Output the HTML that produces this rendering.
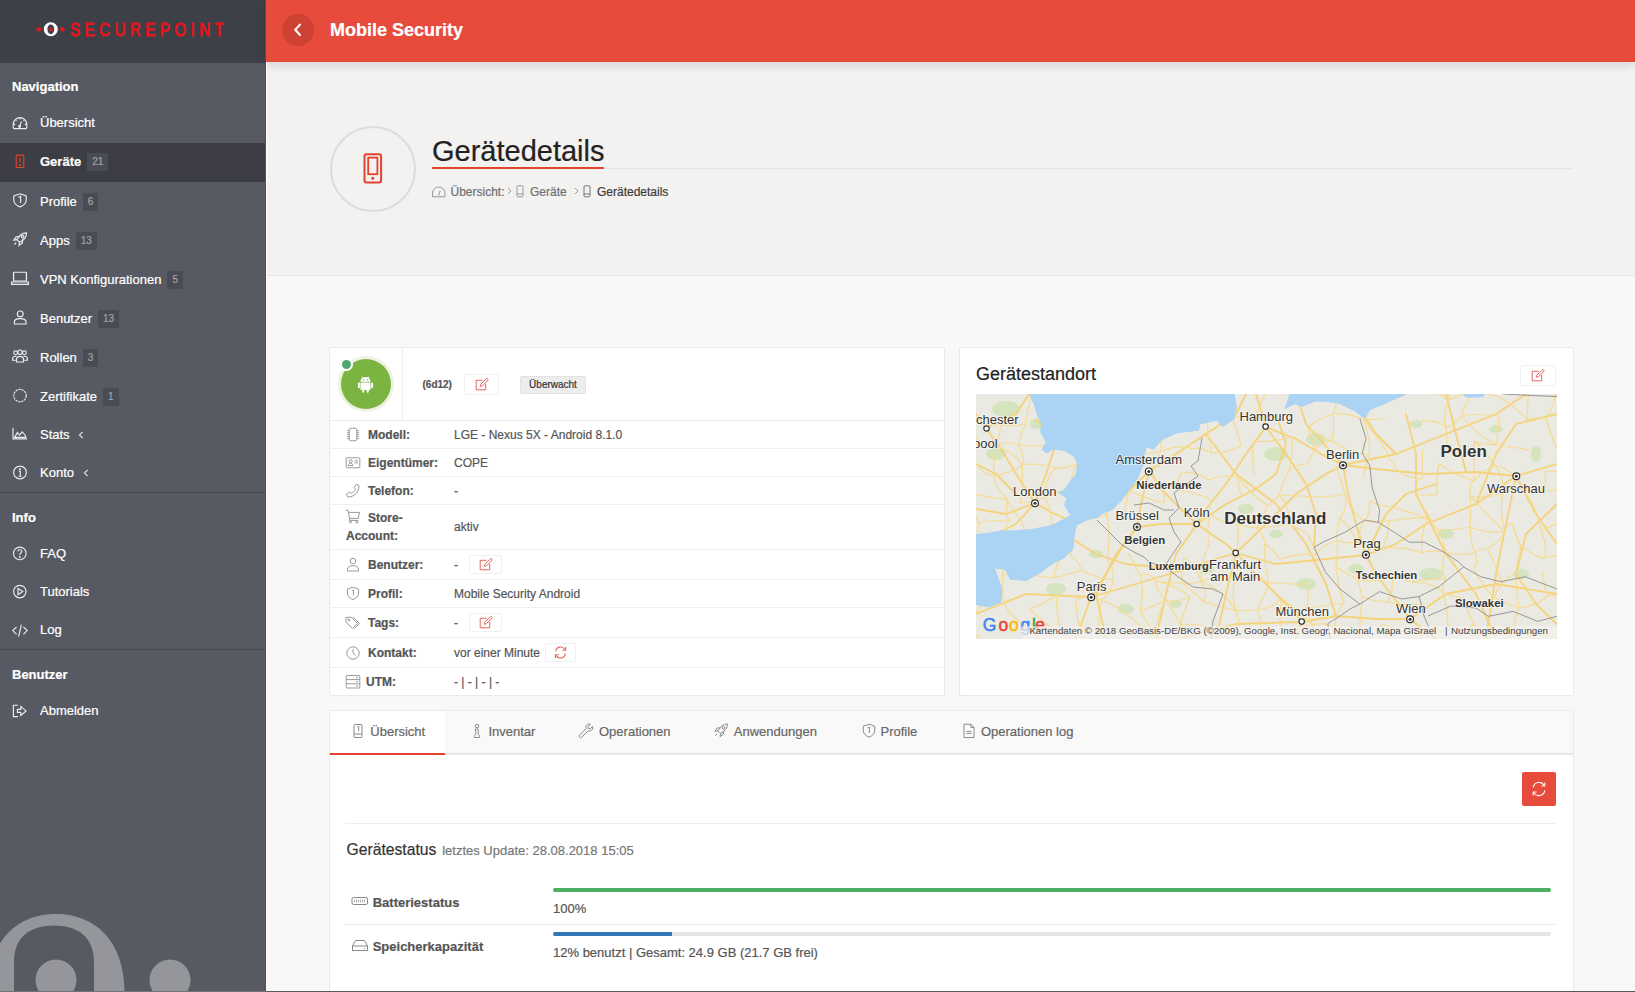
<!DOCTYPE html>
<html><head><meta charset="utf-8">
<style>
*{box-sizing:border-box;margin:0;padding:0}
html,body{width:1635px;height:992px;overflow:hidden}
body{font-family:"Liberation Sans",sans-serif;background:#f9f8f6;position:relative;color:#333;-webkit-text-stroke-width:.2px}
.abs{position:absolute}
#sb{position:absolute;left:0;top:0;width:266px;height:992px;background:#575a63;overflow:hidden;border-right:1px solid #50535a}
#sbw{position:absolute;left:266px;top:62px;width:1px;height:930px;background:#fff;z-index:3}
#logo{position:absolute;left:0;top:0;width:266px;height:63px;background:#3e4048}
.nh{position:absolute;left:12px;font-size:13px;font-weight:bold;color:#fff;line-height:16px}
.ni{position:absolute;left:0;width:266px;height:39px}
.ni .t{position:absolute;left:40px;top:11px;font-size:13px;color:#fff;line-height:16px;white-space:nowrap}
.ic{position:absolute;left:12px;top:11px;width:16px;height:16px;fill:none;stroke:#ececee;stroke-width:1.15}
.bd{display:inline-block;margin-left:6px;background:#4a4c54;color:#a0a2a8;font-size:10px;line-height:18px;height:18px;padding:0 5px;vertical-align:1px;border-radius:1px;font-weight:normal}
.sep{position:absolute;left:0;width:266px;height:1px;background:#45474e}
#hdr{position:absolute;left:266px;top:0;width:1369px;height:62px;background:#e64b3b;box-shadow:0 3px 10px rgba(0,0,0,.13);z-index:2}
#ph{position:absolute;left:266px;top:62px;width:1369px;height:214px;background:#f3f2f0;border-bottom:1px solid #e6e5e3}
.card{position:absolute;background:#fff;border:1px solid #ebeae8;border-radius:2px}
.lbl{font-size:12px;font-weight:bold;color:#555;line-height:14px;white-space:nowrap}
.val{font-size:12px;color:#555;line-height:14px;white-space:nowrap}
.ico{fill:none;stroke:#9a9a9a;stroke-width:1}
.ebtn{border:1px solid #f1f0f0;border-radius:2px;background:#fff;display:flex;align-items:center;justify-content:center}
.tab{position:absolute;top:724px;font-size:13px;color:#666;line-height:16px;white-space:nowrap}
.tico{fill:none;stroke:#8a8a8a;stroke-width:1}
.lbl2{font-size:13px;font-weight:bold;color:#555;line-height:16px;white-space:nowrap}
.val2{font-size:13px;color:#555;line-height:16px;white-space:nowrap}
</style></head><body>
<div id="sb">
  <div id="logo">
    <svg class="abs" style="left:0;top:0" width="266" height="63" viewBox="0 0 266 63">
      <circle cx="38.8" cy="29.3" r="2.3" fill="#e3161d"/>
      <path fill-rule="evenodd" fill="#fff" d="M50.8 22.3A7 7 0 1 1 50.8 36.3A7 7 0 1 1 50.8 22.3Z M50.8 24.4A3.4 4.9 0 1 0 50.8 34.2A3.4 4.9 0 1 0 50.8 24.4Z"/>
      <circle cx="50.8" cy="29.4" r="2" fill="#e3161d"/>
      <circle cx="62.3" cy="29.3" r="2.3" fill="#e3161d"/>
    </svg>
    <div class="abs" style="left:69.5px;top:20px;font-family:'Liberation Sans',sans-serif;font-size:18px;line-height:20px;letter-spacing:5.1px;color:#e8141c;white-space:nowrap;transform:scaleX(.85);transform-origin:0 0;-webkit-text-stroke:.9px #e8141c">SECUREPOINT</div>
  </div>
  <div class="nh" style="top:79px">Navigation</div>
  <div class="ni" style="top:104px"><svg class="ic" viewBox="0 0 16 16"><path d="M2.2 13.6H13.8C14.4 13.6 14.8 13.2 14.8 12.6V9.4C14.8 5.6 11.8 2.6 8 2.6C4.2 2.6 1.2 5.6 1.2 9.4V12.6C1.2 13.2 1.6 13.6 2.2 13.6Z"/><path d="M7.4 11.6L9.6 6.4"/><circle cx="7.6" cy="11.4" r=".9"/><path d="M8 3V4.4M3.6 5.2L4.5 6.1M12.4 5.2L11.5 6.1M2 9.4H3.3M12.7 9.4H14"/></svg><div class="t">Übersicht</div></div>
  <div class="ni" style="top:143px;background:#3d3e45"><svg class="ic" viewBox="0 0 16 16" style="stroke:#e5412f"><rect x="4.2" y="1.1" width="7.6" height="12.4" rx="1"/><path d="M8 3.4V8.6"/><circle cx="8" cy="11.2" r=".5"/></svg><div class="t" style="font-weight:bold;top:10px">Geräte<span class="bd">21</span></div></div>
  <div class="ni" style="top:182px"><svg class="ic" viewBox="0 0 16 16"><path d="M8 0.8L14.2 2.9V7C14.2 10.4 11.5 12.6 8 13.9C4.5 12.6 1.8 10.4 1.8 7V2.9Z"/><path d="M6.5 4.2L8.6 3.4V10"/></svg><div class="t">Profile<span class="bd">6</span></div></div>
  <div class="ni" style="top:221px"><svg class="ic" viewBox="0 0 16 16"><path d="M14.5 0.8C10.5 0.8 6.8 3.6 5 7.6L7.6 10.2C11.6 8.4 14.5 4.8 14.5 0.8Z"/><path d="M5 7.6L1.8 8.2L4.2 4.8L7.8 4.6"/><path d="M7.6 10.2L7 13.4L10.4 11L10.6 7.4"/><circle cx="10.6" cy="4.7" r="1.3"/><path d="M4.2 10.6L2.2 12.6"/></svg><div class="t">Apps<span class="bd">13</span></div></div>
  <div class="ni" style="top:260px"><svg class="ic" viewBox="0 0 16 16" style="left:11px;width:18px;height:16px" preserveAspectRatio="none"><rect x="2.3" y="1.2" width="11.4" height="8.8" rx=".6"/><path d="M0.6 11H15.4V13.4H0.6Z"/></svg><div class="t">VPN Konfigurationen<span class="bd">5</span></div></div>
  <div class="ni" style="top:299px"><svg class="ic" viewBox="0 0 16 16"><circle cx="8.2" cy="3.9" r="2.9"/><path d="M2.3 14V12.2C2.3 9.6 5 8.6 8.2 8.6C11.4 8.6 14.1 9.6 14.1 12.2V14Z"/></svg><div class="t">Benutzer<span class="bd">13</span></div></div>
  <div class="ni" style="top:338px"><svg class="ic" viewBox="0 0 16 16" style="left:11px;width:18px"><circle cx="3.6" cy="3.8" r="1.9"/><circle cx="8" cy="3.2" r="2.2"/><circle cx="12.4" cy="3.8" r="1.9"/><path d="M4.5 13V10.6C4.5 8.4 6 7.4 8 7.4C10 7.4 11.5 8.4 11.5 10.6V13Z"/><path d="M4.4 7.4C2.2 7 0.6 7.8 0.6 9.6V11.2H4.4"/><path d="M11.6 7.4C13.8 7 15.4 7.8 15.4 9.6V11.2H11.6"/></svg><div class="t">Rollen<span class="bd">3</span></div></div>
  <div class="ni" style="top:377px"><svg class="ic" viewBox="0 0 16 16"><circle cx="8" cy="7.6" r="6.2" stroke-dasharray="2.2 0.8"/></svg><div class="t">Zertifikate<span class="bd">1</span></div></div>
  <div class="ni" style="top:416px"><svg class="ic" viewBox="0 0 16 16"><path d="M1 0.8V11.8H15"/><path d="M2.6 10.4L5.4 5.6L7.6 8.2L10.2 4.8L13.2 8.2L13.8 10.4Z"/></svg><div class="t">Stats</div><svg class="abs" style="left:78px;top:15px" width="6" height="8" viewBox="0 0 6 8"><path d="M4.6 1L1.4 4L4.6 7" fill="none" stroke="#ddd" stroke-width="1.1"/></svg></div>
  <div class="ni" style="top:454px"><svg class="ic" viewBox="0 0 16 16"><circle cx="8" cy="7.5" r="6.4"/><path d="M6.8 6.4H8.2V11.2M6.6 11.2H9.6"/><circle cx="8" cy="4.2" r=".5"/></svg><div class="t">Konto</div><svg class="abs" style="left:83px;top:15px" width="6" height="8" viewBox="0 0 6 8"><path d="M4.6 1L1.4 4L4.6 7" fill="none" stroke="#ddd" stroke-width="1.1"/></svg></div>
  <div class="sep" style="top:492px"></div>
  <div class="nh" style="top:510px">Info</div>
  <div class="ni" style="top:535px"><svg class="ic" viewBox="0 0 16 16"><circle cx="7.8" cy="7.4" r="6.3"/><path d="M5.9 5.6C5.9 4.4 6.8 3.7 7.9 3.7C9 3.7 9.8 4.4 9.8 5.4C9.8 6.8 7.9 6.9 7.9 8.6V9"/><circle cx="7.9" cy="11" r=".4"/></svg><div class="t">FAQ</div></div>
  <div class="ni" style="top:573px"><svg class="ic" viewBox="0 0 16 16"><circle cx="7.8" cy="7.6" r="6.2"/><path d="M6 4.6V10.6L10.8 7.6Z"/></svg><div class="t">Tutorials</div></div>
  <div class="ni" style="top:611px"><svg class="ic" viewBox="0 0 16 16" style="left:12px;top:12px"><path d="M4.6 3.8L0.8 7.6L4.6 11.4"/><path d="M11.4 3.8L15.2 7.6L11.4 11.4"/><path d="M9.4 1.6L6.6 13.6"/></svg><div class="t">Log</div></div>
  <div class="sep" style="top:649px"></div>
  <div class="nh" style="top:666.5px">Benutzer</div>
  <div class="ni" style="top:692px"><svg class="ic" viewBox="0 0 16 16" style="top:12px"><path d="M6 1.2H1.4V12.6H6"/><path d="M5.4 5.4H8.8V2.4L14 6.9L8.8 11.4V8.4H5.4Z"/></svg><div class="t">Abmelden</div></div>
  <svg class="abs" style="left:0;top:900px" width="266" height="92" viewBox="0 900 266 92">
    <path fill-rule="evenodd" d="M56 914C96 914 124.5 942 124.5 992H-12C-12 942 16 914 56 914Z M14 992V962C14 937 30 925.5 54 925.5C78 925.5 94 937 94 962V992Z" fill="#95969b"/>
    <circle cx="56" cy="980" r="20.5" fill="#95969b"/>
    <circle cx="170" cy="980" r="20.5" fill="#95969b"/>
  </svg>
</div>
<div id="sbw"></div>
<div id="hdr">
  <div class="abs" style="left:16px;top:14px;width:32px;height:32px;border-radius:50%;background:#cd4233"></div>
  <svg class="abs" style="left:16px;top:14px" width="32" height="32" viewBox="0 0 32 32"><path d="M18 10.6L13.2 15.8L18 21" fill="none" stroke="#fff" stroke-width="2" stroke-linecap="round" stroke-linejoin="round"/></svg>
  <div class="abs" style="left:64px;top:19px;font-size:18px;font-weight:bold;color:#fff;line-height:22px;white-space:nowrap">Mobile Security</div>
</div>
<div id="ph">
  <div class="abs" style="left:64px;top:64px;width:86px;height:86px;border-radius:50%;border:2px solid #dddcda"></div>
  <svg class="abs" style="left:97px;top:91px" width="20" height="31" viewBox="0 0 20 31"><rect x="1.5" y="1.2" width="16.6" height="28.2" rx="2.2" fill="none" stroke="#e5412f" stroke-width="2"/><rect x="5.2" y="4.6" width="9.2" height="16.6" fill="none" stroke="#e5412f" stroke-width="1.8"/><circle cx="9.8" cy="25.2" r="1.5" fill="#e5412f"/></svg>
  <div class="abs" style="left:166px;top:72.5px;font-size:29px;color:#222;line-height:32px;white-space:nowrap">Gerätedetails</div>
  <div class="abs" style="left:166px;top:106px;width:1140px;height:1px;background:#e5e4e2"></div>
  <div class="abs" style="left:166px;top:105px;width:172px;height:2px;background:#e5412f"></div>
  <svg class="abs" style="left:165px;top:123px" width="16" height="13" viewBox="0 0 16 13"><path d="M1.5 11.8V8A6.2 6 0 0 1 13.9 8V11.8Z" fill="none" stroke="#999" stroke-width="1"/><path d="M7.7 10.6L9.2 5.6" stroke="#999" stroke-width="1"/></svg>
  <div class="abs" style="left:184.5px;top:123px;font-size:12px;color:#707070;line-height:14px;white-space:nowrap">Übersicht:</div>
  <svg class="abs" style="left:241px;top:125px" width="5" height="8" viewBox="0 0 5 8"><path d="M1 1L4 4L1 7" fill="none" stroke="#999" stroke-width="1"/></svg>
  <svg class="abs" style="left:250px;top:123px" width="8" height="13" viewBox="0 0 8 13"><rect x="1" y="0.8" width="6" height="11" rx="1" fill="none" stroke="#999" stroke-width="1"/><path d="M1 9H7" stroke="#999"/></svg>
  <div class="abs" style="left:264px;top:123px;font-size:12px;color:#707070;line-height:14px;white-space:nowrap">Geräte</div>
  <svg class="abs" style="left:308px;top:125px" width="5" height="8" viewBox="0 0 5 8"><path d="M1 1L4 4L1 7" fill="none" stroke="#999" stroke-width="1"/></svg>
  <svg class="abs" style="left:317px;top:123px" width="8" height="13" viewBox="0 0 8 13"><rect x="1" y="0.8" width="6" height="11" rx="1" fill="none" stroke="#777" stroke-width="1"/><path d="M1 9H7" stroke="#777"/></svg>
  <div class="abs" style="left:331px;top:123px;font-size:12px;color:#3c3c3c;line-height:14px;white-space:nowrap">Gerätedetails</div>
</div>
<div class="card" style="left:329px;top:347px;width:616px;height:349px">
  <div class="abs" style="left:72px;top:0;width:1px;height:73px;background:#efeeee"></div>
  <div class="abs" style="left:0;top:72px;width:614px;height:1px;background:#efeeed"></div>
  <div class="abs" style="left:8px;top:8px;width:56px;height:56px;border-radius:50%;background:#eef2e2"></div>
  <div class="abs" style="left:11px;top:11px;width:50px;height:50px;border-radius:50%;background:#7cb441"></div>
  <svg class="abs" style="left:23.5px;top:24.5px" width="23" height="23" viewBox="0 0 20 20"><path d="M5.6 7.6A4.4 4.2 0 0 1 14.4 7.6Z" fill="#fff"/><circle cx="8.2" cy="5.8" r=".6" fill="#7cb441"/><circle cx="11.8" cy="5.8" r=".6" fill="#7cb441"/><path d="M7 3.2L7.8 4.4M13 3.2L12.2 4.4" stroke="#fff" stroke-width=".7"/><rect x="5.6" y="8.3" width="8.8" height="6.4" rx=".8" fill="#fff"/><rect x="3.4" y="8.3" width="1.7" height="5" rx=".85" fill="#fff"/><rect x="14.9" y="8.3" width="1.7" height="5" rx=".85" fill="#fff"/><rect x="7.2" y="13.6" width="1.7" height="3.6" rx=".85" fill="#fff"/><rect x="11.1" y="13.6" width="1.7" height="3.6" rx=".85" fill="#fff"/></svg>
  <div class="abs" style="left:10px;top:10px;width:13px;height:13px;border-radius:50%;background:#fff"></div>
  <div class="abs" style="left:12px;top:12px;width:9px;height:9px;border-radius:50%;background:#4ea86b"></div>
  <div class="abs" style="left:92.5px;top:30.5px;font-size:10px;font-weight:bold;color:#555;line-height:12px">(6d12)</div>
  <div class="abs ebtn" style="left:134px;top:26px;width:35px;height:21px"><svg width="14" height="13" viewBox="0 0 14 13"><path d="M7.6 2.3H1.2V11.8H10.7V6" fill="none" stroke="#e5665c" stroke-width="1"/><path d="M5.4 8.3L5.8 6.2L11.4 0.8C11.8 0.5 12.3 0.5 12.6 0.8L13 1.2C13.3 1.5 13.3 2 13 2.3L7.4 7.8Z" fill="none" stroke="#e5665c" stroke-width="1"/></svg></div>
  <div class="abs" style="left:190px;top:27.5px;width:66px;height:18px;background:#eeeded;border:1px solid #e3e2e1;border-radius:2px;font-size:10px;color:#333;line-height:16px;text-align:center">Überwacht</div>
</div>
<div class="abs lbl" style="left:368px;top:427.5px">Modell:</div>
<svg class="abs ico" style="left:345px;top:426.5px" width="16" height="16" viewBox="0 0 16 16"><rect x="4.2" y="1.2" width="7.6" height="12.6" rx="1.8"/><path d="M2.2 3.6H4.2M2.2 5.6H4.2M2.2 7.6H4.2M2.2 9.6H4.2M2.2 11.6H4.2M11.8 3.6H13.8M11.8 5.6H13.8M11.8 7.6H13.8M11.8 9.6H13.8M11.8 11.6H13.8"/></svg>
<div class="abs val" style="left:454px;top:427.5px">LGE - Nexus 5X - Android 8.1.0</div>
<div class="abs" style="left:330px;top:448px;width:614px;height:1px;background:#f0efee"></div>
<div class="abs lbl" style="left:368px;top:455.5px">Eigentümer:</div>
<svg class="abs ico" style="left:345px;top:454.5px" width="16" height="16" viewBox="0 0 16 16"><rect x="1.2" y="2.8" width="13.6" height="10" rx=".8"/><circle cx="5.6" cy="6.2" r="1.5"/><path d="M3.2 10.6C3.2 9 4.2 8.4 5.6 8.4C7 8.4 8 9 8 10.6Z"/><path d="M9.6 5.8H13M9.6 7.8H13"/></svg>
<div class="abs val" style="left:454px;top:455.5px">COPE</div>
<div class="abs" style="left:330px;top:476px;width:614px;height:1px;background:#f0efee"></div>
<div class="abs lbl" style="left:368px;top:483.5px">Telefon:</div>
<svg class="abs ico" style="left:345px;top:482.5px" width="16" height="16" viewBox="0 0 16 16"><path d="M11.4 1.2L9.2 4.4L10.6 6.2C9.8 8 8.2 9.6 6.4 10.4L4.6 9L1.4 11.2L2.8 14C9 14.2 14.2 9 14 2.6Z"/></svg>
<div class="abs val" style="left:454px;top:483.5px">-</div>
<div class="abs" style="left:330px;top:504px;width:614px;height:1px;background:#f0efee"></div>
<div class="abs lbl" style="left:368px;top:511.2px">Store-</div>
<div class="abs lbl" style="left:346px;top:528.6px">Account:</div>
<svg class="abs ico" style="left:345px;top:509.0px" width="16" height="16" viewBox="0 0 16 16"><path d="M0.8 1.4H3L4.6 9.4H13.2L14.6 3.4H3.6"/><path d="M4.6 9.4L4.2 11.4H13.4"/><circle cx="5.6" cy="13" r="1"/><circle cx="11.8" cy="13" r="1"/></svg>
<div class="abs val" style="left:454px;top:519.8px">aktiv</div>
<div class="abs" style="left:330px;top:549px;width:614px;height:1px;background:#f0efee"></div>
<div class="abs lbl" style="left:368px;top:557.5px">Benutzer:</div>
<svg class="abs ico" style="left:345px;top:556.5px" width="16" height="16" viewBox="0 0 16 16"><circle cx="8" cy="4" r="2.8"/><path d="M2.5 14V12.2C2.5 9.7 5 8.7 8 8.7C11 8.7 13.5 9.7 13.5 12.2V14Z"/></svg>
<div class="abs val" style="left:454px;top:557.5px">-</div>
<div class="abs" style="left:330px;top:579px;width:614px;height:1px;background:#f0efee"></div>
<div class="abs lbl" style="left:368px;top:586.5px">Profil:</div>
<svg class="abs ico" style="left:345px;top:585.5px" width="16" height="16" viewBox="0 0 16 16"><path d="M8 1.2L13.6 3V7C13.6 10.2 11.2 12.4 8 13.6C4.8 12.4 2.4 10.2 2.4 7V3Z"/><path d="M6.8 4.6L8.4 4V9.4"/></svg>
<div class="abs val" style="left:454px;top:586.5px">Mobile Security Android</div>
<div class="abs" style="left:330px;top:607px;width:614px;height:1px;background:#f0efee"></div>
<div class="abs lbl" style="left:368px;top:615.5px">Tags:</div>
<svg class="abs ico" style="left:345px;top:614.5px" width="16" height="16" viewBox="0 0 16 16"><path d="M1 2.5V7L7.5 13.5L12.5 8.5L6 2Z" /><circle cx="4" cy="5" r="1"/><path d="M8 2L14.5 8.5L9.5 13.5"/></svg>
<div class="abs val" style="left:454px;top:615.5px">-</div>
<div class="abs" style="left:330px;top:637px;width:614px;height:1px;background:#f0efee"></div>
<div class="abs lbl" style="left:368px;top:645.5px">Kontakt:</div>
<svg class="abs ico" style="left:345px;top:644.5px" width="16" height="16" viewBox="0 0 16 16"><circle cx="8" cy="8" r="6.2"/><path d="M8 4V8L10.6 10.4"/></svg>
<div class="abs val" style="left:454px;top:645.5px">vor einer Minute</div>
<div class="abs" style="left:330px;top:667px;width:614px;height:1px;background:#f0efee"></div>
<div class="abs lbl" style="left:366px;top:674.5px">UTM:</div>
<svg class="abs ico" style="left:345px;top:673.5px" width="16" height="16" viewBox="0 0 16 16"><rect x="1.2" y="1.5" width="13.6" height="12.5" rx=".5"/><path d="M1.2 5.6H14.8M1.2 9.8H14.8M11 3.5H13M11 7.7H13M11 11.9H13"/></svg>
<div class="abs val" style="left:454px;top:674.5px">- | - | - | -</div>
<div class="abs ebtn" style="left:469px;top:555px;width:33px;height:19px"><svg width="14" height="13" viewBox="0 0 14 13"><path d="M7.6 2.3H1.2V11.8H10.7V6" fill="none" stroke="#e5665c" stroke-width="1"/><path d="M5.4 8.3L5.8 6.2L11.4 0.8C11.8 0.5 12.3 0.5 12.6 0.8L13 1.2C13.3 1.5 13.3 2 13 2.3L7.4 7.8Z" fill="none" stroke="#e5665c" stroke-width="1"/></svg></div>
<div class="abs ebtn" style="left:469px;top:613px;width:33px;height:19px"><svg width="14" height="13" viewBox="0 0 14 13"><path d="M7.6 2.3H1.2V11.8H10.7V6" fill="none" stroke="#e5665c" stroke-width="1"/><path d="M5.4 8.3L5.8 6.2L11.4 0.8C11.8 0.5 12.3 0.5 12.6 0.8L13 1.2C13.3 1.5 13.3 2 13 2.3L7.4 7.8Z" fill="none" stroke="#e5665c" stroke-width="1"/></svg></div>
<div class="abs ebtn" style="left:545px;top:643px;width:31px;height:19px"><svg width="13" height="13" viewBox="0 0 13 13"><path d="M1.6 5.4A5 5 0 0 1 10.8 3.4M11.4 7.6A5 5 0 0 1 2.2 9.6" fill="none" stroke="#e5665c" stroke-width="1.1"/><path d="M11.6 1V4.2H8.4M1.4 12V8.8H4.6" fill="none" stroke="#e5665c" stroke-width="1.1"/></svg></div><div class="card" style="left:959px;top:347px;width:615px;height:349px"></div>
<div class="abs" style="left:976px;top:362.5px;font-size:18px;color:#222;line-height:22px;white-space:nowrap">Gerätestandort</div>
<div class="abs ebtn" style="left:1520px;top:365px;width:36px;height:21px"><svg width="14" height="13" viewBox="0 0 14 13"><path d="M7.6 2.3H1.2V11.8H10.7V6" fill="none" stroke="#e5665c" stroke-width="1"/><path d="M5.4 8.3L5.8 6.2L11.4 0.8C11.8 0.5 12.3 0.5 12.6 0.8L13 1.2C13.3 1.5 13.3 2 13 2.3L7.4 7.8Z" fill="none" stroke="#e5665c" stroke-width="1"/></svg></div>
<svg class="abs" style="left:976px;top:394px" width="581" height="245" viewBox="0 0 581 245">
<rect width="581" height="245" fill="#eae9e2"/>
<ellipse cx="30" cy="15" rx="14" ry="8" fill="#d3e4be"/>
<ellipse cx="20" cy="60" rx="10" ry="6" fill="#d3e4be"/>
<ellipse cx="120" cy="85" rx="6" ry="4" fill="#d3e4be"/>
<ellipse cx="300" cy="60" rx="12" ry="7" fill="#d3e4be"/>
<ellipse cx="340" cy="45" rx="10" ry="6" fill="#d3e4be"/>
<ellipse cx="270" cy="115" rx="8" ry="5" fill="#d3e4be"/>
<ellipse cx="330" cy="190" rx="10" ry="6" fill="#d3e4be"/>
<ellipse cx="380" cy="175" rx="8" ry="5" fill="#d3e4be"/>
<ellipse cx="470" cy="140" rx="8" ry="5" fill="#d3e4be"/>
<ellipse cx="520" cy="35" rx="7" ry="4" fill="#d3e4be"/>
<ellipse cx="440" cy="30" rx="6" ry="4" fill="#d3e4be"/>
<ellipse cx="560" cy="60" rx="5" ry="8" fill="#d3e4be"/>
<ellipse cx="80" cy="195" rx="10" ry="6" fill="#d3e4be"/>
<ellipse cx="150" cy="215" rx="8" ry="5" fill="#d3e4be"/>
<ellipse cx="200" cy="210" rx="6" ry="4" fill="#d3e4be"/>
<ellipse cx="455" cy="180" rx="12" ry="6" fill="#d3e4be"/>
<ellipse cx="230" cy="175" rx="8" ry="5" fill="#d3e4be"/>
<ellipse cx="300" cy="140" rx="7" ry="4" fill="#d3e4be"/>
<ellipse cx="60" cy="30" rx="6" ry="5" fill="#d3e4be"/>
<ellipse cx="120" cy="160" rx="7" ry="4" fill="#d3e4be"/>
<ellipse cx="545" cy="180" rx="8" ry="5" fill="#d3e4be"/>
<path d="M52.9 0L58 10L61.7 22.7L65.5 30L64 37.8L70 47.9L65.5 55.4L70.6 59.2L76.9 55.4L88.2 56.7L98.3 63L101.4 70.6L99.5 80.6L93.2 88.2L88.2 95.8L81.9 98.3L90.7 104.6L88.2 110.9L93.2 119.7L95.8 120L88.2 125L75.6 131.3L56.7 135.1L37.8 136.4L25.2 136.4L12.6 138.9L0 140.2L0 210.7L12.6 213.2L25.2 208.2L26.5 195.6L22.7 185.5L18.9 174.2L29 175.4L34 185.5L50.4 186.8L65.5 178L75.6 170.4L88.2 164.1L97 155.3L98.3 142.7L100.8 131.3L110.9 126.3L121 123.8L126 120L136 116L145 107L153.7 95.8L161 85.7L168 70L170 52.9L177.6 55.4L186.4 45.4L201.5 39L222.9 36.5L224.2 30.2L240.6 26.5L246.9 32.8L250.6 30.2L258.2 25.2L260.7 12.6L258.2 0Z" fill="#abd3f3"/>
<path d="M313.6 0L308.6 15.1L318.7 10L326.2 12.6L338.8 7.6L349.3 7.4L364.1 9.9L378.9 17.3L388.8 24.7L393.8 16L408.6 9.9L430.8 0Z M487 0L490 3.5L507 3L509 0Z" fill="#abd3f3"/>
<g fill="none" stroke="#f6d274" stroke-width="1.8" stroke-linejoin="round" stroke-linecap="round" opacity=".95">
<polyline points="290,33 320,45 345,60 367,71"/>
<polyline points="367,71 400,75 450,80 500,78 540,82 581,70"/>
<polyline points="367,71 372,100 380,130 390,161"/>
<polyline points="290,33 270,60 250,90 230,115 221,130"/>
<polyline points="173,77 190,100 210,120 221,130"/>
<polyline points="221,130 235,140 250,150 260,159"/>
<polyline points="260,159 280,180 300,200 315,215 326,228"/>
<polyline points="326,228 360,222 400,225 434,225"/>
<polyline points="434,225 415,200 400,180 390,161"/>
<polyline points="260,159 290,130 320,100 350,80 367,71"/>
<polyline points="115,203 130,180 145,155 161,133"/>
<polyline points="115,203 160,190 210,175 240,165 260,159"/>
<polyline points="59,109 40,80 25,55 10,34 0,20"/>
<polyline points="59,109 75,118 90,125"/>
<polyline points="161,133 185,130 205,130 221,130"/>
<polyline points="161,133 165,110 170,90 173,77"/>
<polyline points="367,71 420,60 470,40 520,20 550,0"/>
<polyline points="540,82 530,130 520,180 510,245"/>
<polyline points="540,82 560,120 581,150"/>
<polyline points="390,161 420,150 450,130 500,110 540,82"/>
<polyline points="430,20 440,60 440,100 470,160 500,200 520,245"/>
<polyline points="434,225 470,200 520,190 581,200"/>
<polyline points="326,228 320,245"/>
<polyline points="326,228 260,230 200,245"/>
<polyline points="115,203 100,245"/>
<polyline points="115,203 50,200 0,220"/>
<polyline points="290,33 280,0"/>
<polyline points="230,40 260,80 300,110 330,150 350,190 360,222"/>
<polyline points="173,77 200,60 230,40 260,20 270,0"/>
<polyline points="161,133 140,160 120,200 130,245"/>
<polyline points="221,130 200,160 190,200 180,245"/>
<polyline points="260,159 250,200 240,245"/>
<polyline points="59,109 30,120 0,115"/>
<polyline points="59,109 40,130 20,140"/>
<polyline points="10,34 40,20 53,0"/>
<polyline points="59,109 70,80 80,50 60,25"/>
<polyline points="367,71 330,30 320,0"/>
<polyline points="390,161 350,165 300,170 260,159"/>
<polyline points="434,225 460,245"/>
<polyline points="500,110 520,60 540,30 581,20"/>
<polyline points="390,161 410,120 430,100 460,90"/>
<polyline points="120,121 130,100 150,90"/>
<polyline points="98,146 120,160 150,170 200,175"/>
<polyline points="0,70 20,80 40,100"/>
<polyline points="581,110 550,140 540,180 560,210 581,230"/>
<polyline points="490,78 480,40 470,0"/>
<polyline points="420,60 400,40 390,25"/>
<polyline points="290,33 310,60 330,90 340,120 338,153"/>
<polyline points="173,77 150,100 138,111"/>
<polyline points="221,130 250,110 280,95 300,80 310,50 300,20"/>
</g>
<g fill="none" stroke="#f7da8a" stroke-width="1.2" opacity=".9">
<path d="M-29 -32Q-22 -36 -6 -33M-23 -8Q-8 5 -3 6M-23 -8Q-29 4 -25 24M-23 -8Q-16 5 -6 27M-25 24Q-18 26 -6 27M-34 52Q-17 51 3 50M-34 52Q-36 59 -34 77M-34 77Q-34 88 -34 97M-34 97Q-24 95 -8 99M-34 97Q-31 122 -27 136M-27 136Q-36 146 -33 151M-33 151Q-17 148 -3 158M-33 151Q-23 174 -24 190M-24 190Q-29 194 -25 206M-20 256Q-15 265 0 267M-6 -33Q17 -30 30 -30M-6 -33Q-9 -17 -3 6M-3 6Q-10 17 -6 27M-6 27Q6 30 25 31M-6 27Q-4 38 3 50M1 70Q6 81 18 81M-8 99Q11 104 31 105M-8 99Q-5 116 3 129M3 129Q12 126 33 127M3 129Q2 139 -3 158M-3 158Q-6 174 -1 178M-1 178Q-1 198 5 212M5 212Q-3 220 -5 235M-5 235Q5 246 18 264M30 -30Q37 -29 55 -17M30 -30Q37 -14 35 -7M25 31Q42 33 50 29M25 31Q24 40 20 52M20 52Q28 46 43 51M20 52Q17 72 18 81M20 52Q38 58 46 71M18 81Q36 80 46 71M18 81Q19 93 31 105M31 105Q30 121 33 127M31 105Q37 119 45 125M33 127Q26 137 30 158M30 158Q43 165 50 163M30 158Q26 175 27 181M27 181Q39 179 44 181M27 181Q24 202 32 216M32 216Q42 228 58 241M18 264Q32 261 48 258M55 -17Q60 -8 58 -4M58 -4Q52 10 50 29M50 29Q43 43 43 51M43 51Q53 52 73 52M43 51Q50 66 46 71M46 71Q58 68 80 74M46 71Q48 89 44 109M44 109Q58 108 69 103M45 125Q52 142 50 163M50 163Q71 157 86 159M50 163Q44 168 44 181M44 181Q59 181 78 184M53 215Q71 209 81 200M53 215Q69 231 85 239M58 241Q69 248 85 265M48 258Q72 263 85 265M75 -19Q85 -13 86 -6M86 -6Q92 7 96 18M72 21Q83 15 96 18M72 21Q70 38 73 52M73 52Q80 47 99 46M80 74Q87 75 101 70M80 74Q69 83 69 103M69 103Q84 95 95 98M69 103Q75 116 76 131M76 131Q92 127 97 128M76 131Q79 144 86 159M86 159Q79 175 78 184M78 184Q97 179 106 176M81 200Q79 214 85 239M85 239Q99 252 110 269M85 265Q93 265 110 269M102 -28Q121 -32 129 -26M102 -28Q103 -7 97 2M97 2Q115 3 123 -7M97 2Q91 15 96 18M99 46Q121 43 136 46M99 46Q104 62 101 70M101 70Q110 78 121 86M101 70Q94 81 95 98M95 98Q97 116 97 128M95 98Q117 105 131 121M97 128Q114 126 131 121M97 128Q95 146 95 163M95 163Q100 163 106 176M106 176Q118 184 137 186M100 205Q112 201 126 206M100 205Q100 211 102 227M102 227Q107 235 124 239M102 227Q109 251 110 269M110 269Q120 265 131 265M129 -26Q130 -11 123 -7M123 -7Q131 7 127 22M127 22Q135 39 136 46M127 22Q143 42 162 56M136 46Q154 48 162 56M136 46Q144 67 151 78M121 86Q133 82 151 78M121 86Q120 88 131 98M121 86Q143 93 153 96M131 98Q134 105 131 121M131 121Q135 144 131 165M131 165Q139 177 137 186M137 186Q137 196 126 206M126 206Q121 225 124 239M126 206Q149 216 164 232M153 -31Q159 -37 177 -31M153 -31Q159 -12 162 9M162 9Q159 22 162 32M162 9Q169 15 188 26M162 32Q174 25 188 26M162 32Q163 40 162 56M162 56Q169 62 185 57M162 56Q152 62 151 78M153 96Q166 104 189 109M153 96Q149 113 148 126M152 159Q158 169 164 181M164 181Q175 178 179 187M164 181Q169 195 164 217M164 217Q177 213 190 206M164 217Q170 227 180 242M164 232Q177 240 180 242M164 232Q179 246 186 254M151 255Q171 254 186 254M177 -31Q184 -35 201 -32M177 -31Q178 -9 184 7M188 26Q194 32 202 32M188 26Q184 43 185 57M185 57Q205 50 217 55M185 57Q176 72 175 81M175 81Q187 93 189 109M179 187Q196 189 207 189M179 187Q181 198 190 206M179 187Q201 191 214 203M190 206Q197 210 214 203M190 206Q181 218 180 242M190 206Q199 220 204 230M180 242Q193 250 203 262M201 -32Q219 -7 227 7M215 6Q205 14 202 32M215 6Q228 19 231 25M217 55Q221 52 236 59M205 79Q218 76 233 86M205 79Q201 90 201 95M201 95Q223 100 234 105M216 133Q224 126 234 121M208 164Q204 181 207 189M208 164Q221 172 225 187M207 189Q212 191 225 187M207 189Q217 198 228 208M214 203Q209 215 204 230M204 230Q226 230 238 235M204 230Q206 246 203 262M204 230Q219 240 231 260M227 7Q239 3 253 1M227 7Q246 9 255 22M231 25Q241 28 255 22M231 25Q232 47 236 59M236 59Q251 59 265 52M233 86Q245 80 261 83M234 105Q233 116 234 121M234 121Q248 130 262 130M234 121Q230 133 233 150M233 150Q225 166 225 187M225 187Q238 183 259 183M225 187Q232 200 228 208M225 187Q248 197 260 216M228 208Q250 215 260 216M238 235Q252 233 264 241M238 235Q233 242 231 260M261 -21Q259 -10 253 1M261 -21Q278 -15 292 -7M255 22Q270 23 279 25M255 22Q263 42 265 52M261 83Q262 94 267 103M261 83Q275 100 291 111M262 130Q270 133 280 134M262 130Q263 150 260 159M259 183Q282 181 293 190M259 183Q255 203 260 216M260 216Q265 217 281 216M260 216Q264 229 264 241M264 241Q265 254 268 256M287 -18Q300 -27 306 -27M292 -7Q299 -6 312 -3M292 -7Q285 8 279 25M279 25Q290 21 307 23M278 47Q294 49 316 43M278 47Q275 60 278 81M291 111Q294 112 303 101M291 111Q287 126 280 134M280 134Q295 133 314 130M280 134Q288 140 289 150M289 150Q295 154 304 165M289 150Q287 164 293 190M293 190Q302 188 317 190M293 190Q286 205 281 216M281 216Q298 214 305 204M281 216Q286 230 284 234M284 234Q298 238 304 239M284 234Q284 255 295 266M295 266Q297 255 308 253M306 -27Q325 -25 337 -19M306 -27Q314 -12 312 -3M306 -27Q330 -14 344 -4M316 43Q317 59 313 77M313 77Q319 70 331 70M313 77Q308 84 303 101M303 101Q322 102 341 103M303 101Q313 110 314 130M314 130Q323 136 330 138M304 165Q328 158 340 161M317 190Q325 192 331 188M305 204Q304 226 304 239M305 204Q324 219 337 231M304 239Q325 233 337 231M304 239Q306 249 308 253M308 253Q322 261 339 268M337 -19Q344 -13 344 -4M344 -4Q354 1 364 -5M332 34Q342 24 357 20M332 34Q337 48 339 56M332 34Q346 45 356 47M339 56Q342 49 356 47M339 56Q331 68 331 70M341 103Q356 103 369 100M330 138Q337 149 340 161M340 161Q347 149 361 147M331 188Q334 205 330 215M330 215Q347 211 368 209M330 215Q333 225 337 231M337 231Q349 227 358 234M337 231Q342 250 339 268M339 268Q350 259 372 253M360 -33Q383 -24 396 -27M360 -33Q361 -23 364 -5M364 -5Q373 -5 390 6M364 -5Q363 3 357 20M357 20Q377 19 388 26M357 20Q359 30 356 47M356 47Q369 57 393 61M361 74Q366 90 369 100M369 100Q372 115 364 124M369 100Q373 116 388 127M364 124Q360 139 361 147M364 124Q377 137 382 149M361 147Q370 149 382 149M361 147Q362 156 360 173M360 173Q373 181 382 186M360 173Q362 195 368 209M368 209Q361 216 358 234M372 253Q390 262 397 263M396 -27Q402 -30 412 -31M390 6Q394 20 388 26M388 26Q396 25 410 25M388 26Q395 48 393 61M388 26Q404 47 412 60M393 61Q388 77 387 84M394 106Q403 113 411 112M394 106Q394 122 388 127M388 127Q403 127 413 127M388 127Q382 141 382 149M382 149Q390 155 407 154M382 186Q404 189 416 182M382 186Q384 195 386 202M386 202Q394 207 411 208M386 202Q385 220 383 240M383 240Q389 241 407 230M383 240Q385 253 397 263M397 263Q404 259 409 258M412 -31Q417 -38 434 -35M412 -1Q426 -6 438 -5M412 60Q413 66 425 79M425 79Q430 83 446 85M411 112Q432 117 451 124M413 127Q437 123 451 124M413 127Q411 146 407 154M407 154Q426 152 446 159M416 182Q419 182 434 188M416 182Q418 200 411 208M411 208Q433 212 449 210M407 230Q422 238 446 240M409 258Q423 262 436 260M434 -35Q449 -30 468 -20M434 -35Q436 -24 438 -5M438 -5Q458 -5 473 6M444 27Q462 26 470 33M447 55Q446 65 446 85M440 101Q455 101 461 101M440 101Q447 113 461 136M451 124Q444 146 446 159M446 159Q453 156 469 158M434 188Q452 184 470 185M434 188Q457 188 468 199M446 240Q457 236 473 238M446 240Q439 256 436 260M468 -20Q480 -22 497 -34M468 -20Q473 -10 473 6M473 6Q490 -1 498 -4M473 6Q466 23 470 33M470 33Q477 32 486 22M470 33Q471 40 471 55M463 70Q476 79 498 87M463 70Q460 82 461 101M461 136Q472 137 494 133M461 136Q468 142 469 158M469 158Q488 163 499 158M469 158Q464 177 470 185M470 185Q465 196 468 199M468 199Q476 202 488 204M468 199Q471 218 473 238M473 238Q488 238 498 230M497 -34Q507 -37 512 -30M498 -4Q511 -0 523 3M498 -4Q487 14 486 22M486 22Q500 19 523 22M486 22Q498 39 520 51M498 47Q503 50 520 51M498 47Q498 69 498 87M498 47Q513 62 519 71M498 87Q504 79 519 71M498 87Q493 90 494 102M494 102Q512 105 527 99M494 102Q495 121 494 133M494 102Q515 125 529 138M494 133Q510 140 529 138M494 133Q495 151 499 158M499 158Q502 155 511 155M499 158Q503 170 497 174M497 174Q508 195 519 204M488 204Q492 219 498 230M498 230Q501 235 515 242M498 230Q491 237 495 251M523 3Q539 12 552 26M523 22Q522 42 520 51M520 51Q537 53 553 56M519 71Q532 74 541 85M519 71Q529 85 527 99M527 99Q537 93 546 95M527 99Q523 116 529 138M529 138Q530 129 537 130M529 138Q524 148 511 155M511 155Q521 172 526 190M526 190Q532 183 540 179M526 190Q519 197 519 204M519 204Q525 207 543 214M515 242Q526 238 537 239M540 -26Q554 -19 580 -22M540 -26Q542 -17 554 -7M554 -7Q550 15 552 26M552 26Q559 23 570 24M546 95Q560 98 568 96M546 95Q560 110 565 136M537 130Q541 147 545 152M545 152Q560 163 568 164M545 152Q541 165 540 179M540 179Q540 197 543 214M543 214Q561 212 572 202M543 214Q539 223 537 239M537 239Q554 241 570 242M537 239Q550 244 552 253M580 -22Q579 -8 579 -4M580 -22Q587 -10 606 1M579 -4Q598 2 606 1M579 -4Q580 10 570 24M570 24Q574 40 581 54M569 77Q585 77 603 81M569 77Q570 91 568 96M568 96Q580 97 594 96M565 136Q589 126 606 123M565 136Q572 154 568 164M568 164Q588 161 597 153M567 178Q566 188 572 202M572 202Q586 199 607 204M570 242Q591 238 601 230M570 242Q573 257 579 266M600 -19Q601 -5 606 1M606 1Q606 6 602 18M602 18Q603 32 602 51M603 81Q604 89 594 96M594 96Q595 105 606 123M597 153Q591 166 594 186M594 186Q604 196 607 204M601 230Q594 248 599 258"/>
</g>
<path d="M52.9 0L58 10L61.7 22.7L65.5 30L64 37.8L70 47.9L65.5 55.4L70.6 59.2L76.9 55.4L88.2 56.7L98.3 63L101.4 70.6L99.5 80.6L93.2 88.2L88.2 95.8L81.9 98.3L90.7 104.6L88.2 110.9L93.2 119.7L95.8 120L88.2 125L75.6 131.3L56.7 135.1L37.8 136.4L25.2 136.4L12.6 138.9L0 140.2L0 210.7L12.6 213.2L25.2 208.2L26.5 195.6L22.7 185.5L18.9 174.2L29 175.4L34 185.5L50.4 186.8L65.5 178L75.6 170.4L88.2 164.1L97 155.3L98.3 142.7L100.8 131.3L110.9 126.3L121 123.8L126 120L136 116L145 107L153.7 95.8L161 85.7L168 70L170 52.9L177.6 55.4L186.4 45.4L201.5 39L222.9 36.5L224.2 30.2L240.6 26.5L246.9 32.8L250.6 30.2L258.2 25.2L260.7 12.6L258.2 0Z" fill="#abd3f3"/>
<path d="M313.6 0L308.6 15.1L318.7 10L326.2 12.6L338.8 7.6L349.3 7.4L364.1 9.9L378.9 17.3L388.8 24.7L393.8 16L408.6 9.9L430.8 0Z M487 0L490 3.5L507 3L509 0Z" fill="#abd3f3"/>
<g fill="none" stroke="#8e8e8e" stroke-width=".9">
<polyline points="226,44 222,67 215,72 222,82 198,99 203,114 193,124 198,138 205,148 198,158 188,173 217,193 237,195 247,200 237,227 235,245"/>
<polyline points="121,126 133,138 146,151 158,158 168,163 173,168 188,173"/>
<polyline points="158,111 173,109 188,116 198,116"/>
<polyline points="383.9,24.7 390,44.5 386.3,59.3 393.8,71.6 396.2,93.9 403.6,116.1 402.4,128.5"/>
<polyline points="402.4,128.5 388.8,126 369,138.3 346.8,148.2 338.2,153.2 349.3,177.9 364.1,195.2 383.9,210 403.6,197.6 425.9,205 443.2,202.5 462.9,192.7 487.6,172.9"/>
<polyline points="402.4,128.5 418.5,138.3 433.3,148.2 448.1,148.2 467.9,158.1 482.7,168 487.6,172.9 504.9,182.8 524.7,187.7 549.4,182.8 581,195"/>
<polyline points="383.9,210 374,215 364,222 351.8,229.7 354,245"/>
<polyline points="443,202 448,222 458,245"/>
<polyline points="452,222 475,212 500,214 512.3,222.3 537,217.4 561.7,227.3 581,222.3"/>
<polyline points="527,0 555,1.5 581,2.5"/>
</g>
<circle cx="10.5" cy="34.5" r="2.7" fill="#fff" stroke="#333" stroke-width="1.2"/>
<circle cx="289.6" cy="32.6" r="2.7" fill="#fff" stroke="#333" stroke-width="1.2"/>
<circle cx="172.8" cy="77.4" r="3.4" fill="#fff" stroke="#333" stroke-width="1.2"/><circle cx="172.8" cy="77.4" r="1.5" fill="#333"/>
<circle cx="59" cy="109.2" r="3.4" fill="#fff" stroke="#333" stroke-width="1.2"/><circle cx="59" cy="109.2" r="1.5" fill="#333"/>
<circle cx="367" cy="71.3" r="3.4" fill="#fff" stroke="#333" stroke-width="1.2"/><circle cx="367" cy="71.3" r="1.5" fill="#333"/>
<circle cx="540.3" cy="82.3" r="3.4" fill="#fff" stroke="#333" stroke-width="1.2"/><circle cx="540.3" cy="82.3" r="1.5" fill="#333"/>
<circle cx="161" cy="133" r="3.4" fill="#fff" stroke="#333" stroke-width="1.2"/><circle cx="161" cy="133" r="1.5" fill="#333"/>
<circle cx="220.6" cy="130" r="2.7" fill="#fff" stroke="#333" stroke-width="1.2"/>
<circle cx="259.7" cy="158.9" r="2.7" fill="#fff" stroke="#333" stroke-width="1.2"/>
<circle cx="390" cy="160.8" r="3.4" fill="#fff" stroke="#333" stroke-width="1.2"/><circle cx="390" cy="160.8" r="1.5" fill="#333"/>
<circle cx="115.2" cy="203.3" r="3.4" fill="#fff" stroke="#333" stroke-width="1.2"/><circle cx="115.2" cy="203.3" r="1.5" fill="#333"/>
<circle cx="325.7" cy="227.6" r="2.7" fill="#fff" stroke="#333" stroke-width="1.2"/>
<circle cx="434.1" cy="225.3" r="3.4" fill="#fff" stroke="#333" stroke-width="1.2"/><circle cx="434.1" cy="225.3" r="1.5" fill="#333"/>
<g font-family="Liberation Sans, sans-serif" fill="#333" stroke="#fff" stroke-width="2" stroke-opacity=".55" paint-order="stroke">
<text x="0.0" y="29.6" font-size="13" font-weight="normal">chester</text>
<text x="-3.0" y="53.5" font-size="13" font-weight="normal">pool</text>
<text x="263.5" y="27.0" font-size="13" font-weight="normal">Hamburg</text>
<text x="139.5" y="70.2" font-size="13" font-weight="normal">Amsterdam</text>
<text x="160.3" y="94.8" font-size="11.4" font-weight="bold">Niederlande</text>
<text x="37.0" y="102.4" font-size="13" font-weight="normal">London</text>
<text x="350.0" y="64.9" font-size="13" font-weight="normal">Berlin</text>
<text x="464.5" y="63.0" font-size="17" font-weight="bold">Polen</text>
<text x="511.0" y="98.6" font-size="13" font-weight="normal">Warschau</text>
<text x="139.5" y="126.3" font-size="13" font-weight="normal">Brüssel</text>
<text x="207.7" y="123.3" font-size="13" font-weight="normal">Köln</text>
<text x="248.3" y="130.1" font-size="17" font-weight="bold">Deutschland</text>
<text x="148.2" y="149.8" font-size="11.4" font-weight="bold">Belgien</text>
<text x="377.3" y="154.0" font-size="13" font-weight="normal">Prag</text>
<text x="172.8" y="175.6" font-size="11" font-weight="bold">Luxemburg</text>
<text x="233.0" y="174.5" font-size="13" font-weight="normal">Frankfurt</text>
<text x="234.3" y="187.0" font-size="13" font-weight="normal">am Main</text>
<text x="379.5" y="185.1" font-size="11.4" font-weight="bold">Tschechien</text>
<text x="100.8" y="196.5" font-size="13" font-weight="normal">Paris</text>
<text x="478.9" y="212.8" font-size="11.4" font-weight="bold">Slowakei</text>
<text x="299.5" y="221.9" font-size="13" font-weight="normal">München</text>
<text x="420.0" y="219.2" font-size="13" font-weight="normal">Wien</text>
</g>
<text x="6.8" y="236.5" font-family="Liberation Sans, sans-serif" font-size="17.5" fill="#4285f4" stroke="#4285f4" stroke-width=".5">G</text>
<text x="22.6" y="236.5" font-family="Liberation Sans, sans-serif" font-size="17.5" fill="#ea4335" stroke="#ea4335" stroke-width=".5">o</text>
<text x="33" y="236.5" font-family="Liberation Sans, sans-serif" font-size="17.5" fill="#fbbc05" stroke="#fbbc05" stroke-width=".5">o</text>
<text x="44.6" y="236.5" font-family="Liberation Sans, sans-serif" font-size="17.5" fill="#4285f4" stroke="#4285f4" stroke-width=".5">g</text>
<text x="56" y="236.5" font-family="Liberation Sans, sans-serif" font-size="17.5" fill="#34a853" stroke="#34a853" stroke-width=".5">l</text>
<text x="59.2" y="236.5" font-family="Liberation Sans, sans-serif" font-size="17.5" fill="#ea4335" stroke="#ea4335" stroke-width=".5">e</text>
<rect x="45.4" y="232.3" width="536" height="13" fill="#f4f3f0" opacity=".72"/>
<text x="53.4" y="240.2" font-family="Liberation Sans, sans-serif" font-size="9.7" fill="#444">Kartendaten © 2018 GeoBasis-DE/BKG (©2009), Google, Inst. Geogr. Nacional, Mapa GISrael</text>
<text x="469" y="240.2" font-family="Liberation Sans, sans-serif" font-size="9.7" fill="#444">|</text>
<text x="475" y="240.2" font-family="Liberation Sans, sans-serif" font-size="9.7" fill="#444">Nutzungsbedingungen</text>
</svg><div class="card" style="left:329px;top:710px;width:1245px;height:300px;overflow:hidden">
  <div class="abs" style="left:0;top:0;width:1243px;height:43px;background:#faf9f9"></div>
  <div class="abs" style="left:0;top:0;width:115px;height:43px;background:#fff"></div>
  <div class="abs" style="left:0;top:42px;width:1243px;height:2px;background:#e8e7e7"></div>
  <div class="abs" style="left:0;top:42px;width:115px;height:2px;background:#e5412f"></div>
</div>
<div class="tab" style="left:370.3px">Übersicht</div>
<div class="tab" style="left:488.4px">Inventar</div>
<div class="tab" style="left:599px">Operationen</div>
<div class="tab" style="left:733.8px">Anwendungen</div>
<div class="tab" style="left:880.5px">Profile</div>
<div class="tab" style="left:980.9px">Operationen log</div>
<svg class="abs tico" style="left:351px;top:723px" width="14" height="16" viewBox="0 0 14 16"><rect x="3" y="1.5" width="8" height="13" rx="1"/><path d="M3 11H11M6.3 3.6H7.7V8"/></svg>
<svg class="abs tico" style="left:470px;top:723px" width="14" height="16" viewBox="0 0 14 16"><circle cx="7" cy="3" r="1.8"/><path d="M5.5 6H8.2V11.5C9.4 11.8 9.6 12.6 9.6 14.5H4.4C4.4 12.6 4.6 11.8 5.8 11.5V8.2H5.5Z"/></svg>
<svg class="abs tico" style="left:578px;top:723px" width="16" height="16" viewBox="0 0 16 16"><path d="M14.6 3.4L12.2 5.8L10.2 5.6L10 3.6L12.4 1.2C10.6 0.6 8.6 1.4 8 3.2C7.6 4.2 7.8 5 8 5.6L1.6 12C1 12.6 1 13.6 1.6 14.2C2.2 14.8 3.2 14.8 3.8 14.2L10.2 7.8C10.8 8.2 11.6 8.2 12.6 7.8C14.4 7.2 15.2 5.2 14.6 3.4Z"/></svg>
<svg class="abs tico" style="left:713px;top:723px" width="16" height="16" viewBox="0 0 16 16"><path d="M14.5 1C10.5 1 6.8 3.8 5 7.8L7.6 10.4C11.6 8.6 14.5 5 14.5 1Z"/><path d="M5 7.8L1.8 8.4L4.2 5L7.8 4.8"/><path d="M7.6 10.4L7 13.6L10.4 11.2L10.6 7.6"/><circle cx="10.6" cy="4.9" r="1.3"/><path d="M4.2 10.8L2.2 12.8"/></svg>
<svg class="abs tico" style="left:861px;top:723px" width="16" height="16" viewBox="0 0 16 16"><path d="M8 1.2L13.8 3.2V7.2C13.8 10.4 11.4 12.8 8 14.2C4.6 12.8 2.2 10.4 2.2 7.2V3.2Z"/><path d="M6.6 4.8L8.4 4.2V10"/></svg>
<svg class="abs tico" style="left:962px;top:723px" width="14" height="16" viewBox="0 0 14 16"><path d="M2 1.2H8.8L12 4.4V14.6H2Z"/><path d="M8.8 1.2V4.4H12M4.6 8.4H9.4M4.6 10.4H9.4"/></svg>
<div class="abs" style="left:1522px;top:772px;width:34px;height:34px;background:#e64b3b;border-radius:2px"></div>
<svg class="abs" style="left:1531px;top:781px" width="16" height="16" viewBox="0 0 16 16"><path d="M2.2 6.6A6 6 0 0 1 13.2 4.2M13.8 9.4A6 6 0 0 1 2.8 11.8" fill="none" stroke="#fff" stroke-width="1.1"/><path d="M13.8 1.6V5H10.4M2.2 14.4V11H5.6" fill="none" stroke="#fff" stroke-width="1.1"/></svg>
<div class="abs" style="left:345px;top:822.5px;width:1211px;height:1px;background:#efeeed"></div>
<div class="abs" style="left:346.5px;top:840.5px;font-size:15.7px;color:#333;line-height:18px;white-space:nowrap">Gerätestatus <span style="font-size:13px;color:#777;margin-left:1.5px">letztes Update: 28.08.2018 15:05</span></div>
<svg class="abs" style="left:351px;top:896px" width="18" height="11" viewBox="0 0 18 11"><rect x="1" y="1.5" width="15.5" height="7" rx="1.6" fill="none" stroke="#888" stroke-width="1"/><path d="M3.6 3.6V6.4M5.6 3.6V6.4M7.6 3.6V6.4M9.6 3.6V6.4M11.6 3.6V6.4M13.6 3.6V6.4" stroke="#aaa" stroke-width="1"/></svg>
<div class="abs lbl2" style="left:372.7px;top:894.8px">Batteriestatus</div>
<div class="abs" style="left:553px;top:888px;width:998px;height:4px;background:#4caf62;border-radius:2px"></div>
<div class="abs val2" style="left:553px;top:901px">100%</div>
<div class="abs" style="left:345px;top:923.5px;width:1211px;height:1px;background:#eceaea"></div>
<svg class="abs" style="left:351px;top:939px" width="18" height="13" viewBox="0 0 18 13"><path d="M1.5 7L4.5 1.5H13.5L16.5 7V11.5H1.5Z M1.5 7H16.5" fill="none" stroke="#888" stroke-width="1"/><circle cx="13.5" cy="9.3" r=".6" fill="#888"/></svg>
<div class="abs lbl2" style="left:372.7px;top:938.6px">Speicherkapazität</div>
<div class="abs" style="left:553px;top:932px;width:998px;height:4px;background:#e6e5e5;border-radius:2px"></div>
<div class="abs" style="left:553px;top:932px;width:119px;height:4px;background:#3276b8;border-radius:2px 0 0 2px"></div>
<div class="abs val2" style="left:553px;top:945px">12% benutzt | Gesamt: 24.9 GB (21.7 GB frei)</div>
<div class="abs" style="left:266px;top:991px;width:1369px;height:1px;background:#5a5a5a;z-index:5"></div><div class="abs" style="left:0;top:991px;width:266px;height:1px;background:#727376;z-index:5"></div>
</body></html>
